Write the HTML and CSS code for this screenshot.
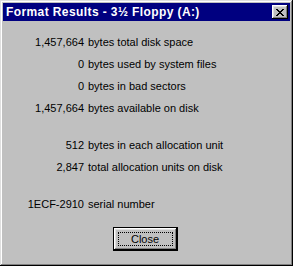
FILE: index.html
```html
<!DOCTYPE html>
<html lang="en">
<head>
    <meta charset="UTF-8">
    <title>Format Results</title>
    <link rel="stylesheet" href="styles.css">
</head>
<body>
    <div class="window">
        <div class="titlebar">
            <span class="title">Format Results - 3½ Floppy (A:)</span>
            <button class="close-x" aria-label="Close">
                <svg width="8" height="7" viewBox="0 0 8 7">
                    <path d="M0 0h2v1h1v1h2v-1h1v-1h2v1h-1v1h-1v1h-1v1h1v1h1v1h1v1h-2v-1h-1v-1h-2v1h-1v1h-2v-1h1v-1h1v-1h1v-1h-1v-1h-1v-1h-1z" fill="#000"/>
                </svg>
            </button>
        </div>

        <div class="results">
            <div class="group">
                <div class="row"><span class="num">1,457,664</span><span class="label">bytes total disk space</span></div>
                <div class="row"><span class="num">0</span><span class="label">bytes used by system files</span></div>
                <div class="row"><span class="num">0</span><span class="label">bytes in bad sectors</span></div>
                <div class="row"><span class="num">1,457,664</span><span class="label">bytes available on disk</span></div>
            </div>
            <div class="group">
                <div class="row"><span class="num">512</span><span class="label">bytes in each allocation unit</span></div>
                <div class="row"><span class="num">2,847</span><span class="label">total allocation units on disk</span></div>
            </div>
            <div class="group">
                <div class="row"><span class="num">1ECF-2910</span><span class="label">serial number</span></div>
            </div>
        </div>

        <div class="buttons">
            <button class="btn default"><span class="focus">Close</span></button>
        </div>
    </div>
</body>
</html>
```

FILE: styles.css
```css
body {
    margin: 0;
    background-color: #c0c0c0;
    font-family: "Liberation Sans", Arial, sans-serif;
    font-size: 11px;
    color: #000;
}

.window {
    width: 293px;
    height: 266px;
    box-sizing: border-box;
    padding: 3px;
    background-color: #c0c0c0;
    box-shadow: inset -1px -1px #000, inset 1px 1px #dfdfdf,
                inset -2px -2px #808080, inset 2px 2px #fff;
}

.titlebar {
    height: 18px;
    background-color: #000080;
    color: white;
    display: flex;
    align-items: center;
    justify-content: space-between;
    padding: 0 2px 0 3px;
}

.title {
    font-weight: bold;
    font-size: 12px;
    letter-spacing: 0.4px;
}

.close-x {
    width: 16px;
    height: 14px;
    padding: 0;
    border: none;
    background-color: #c0c0c0;
    display: flex;
    align-items: center;
    justify-content: center;
    box-shadow: inset -1px -1px #000, inset 1px 1px #fff,
                inset -2px -2px #808080, inset 2px 2px #dfdfdf;
}

.results {
    padding-top: 10px;
}

.group {
    margin-bottom: 15px;
}

.group:last-child {
    margin-bottom: 0;
}

.row {
    display: flex;
    height: 22px;
    align-items: center;
}

.group:last-child .row {
    margin-top: 2px;
}

.num {
    width: 81px;
    text-align: right;
    margin-right: 4px;
}

.buttons {
    display: flex;
    justify-content: center;
    margin-top: 13px;
    padding-right: 3px;
}

.btn {
    width: 63px;
    height: 22px;
    padding: 4px;
    border: none;
    background-color: #c0c0c0;
    font-family: inherit;
    font-size: 11px;
    box-shadow: inset -1px -1px #000, inset 1px 1px #fff,
                inset -2px -2px #808080, inset 2px 2px #dfdfdf;
}

.btn.default {
    outline: 1px solid #000;
}

.focus {
    display: block;
    height: 100%;
    box-sizing: border-box;
    border: 1px dotted #000;
    line-height: 12px;
}
```
